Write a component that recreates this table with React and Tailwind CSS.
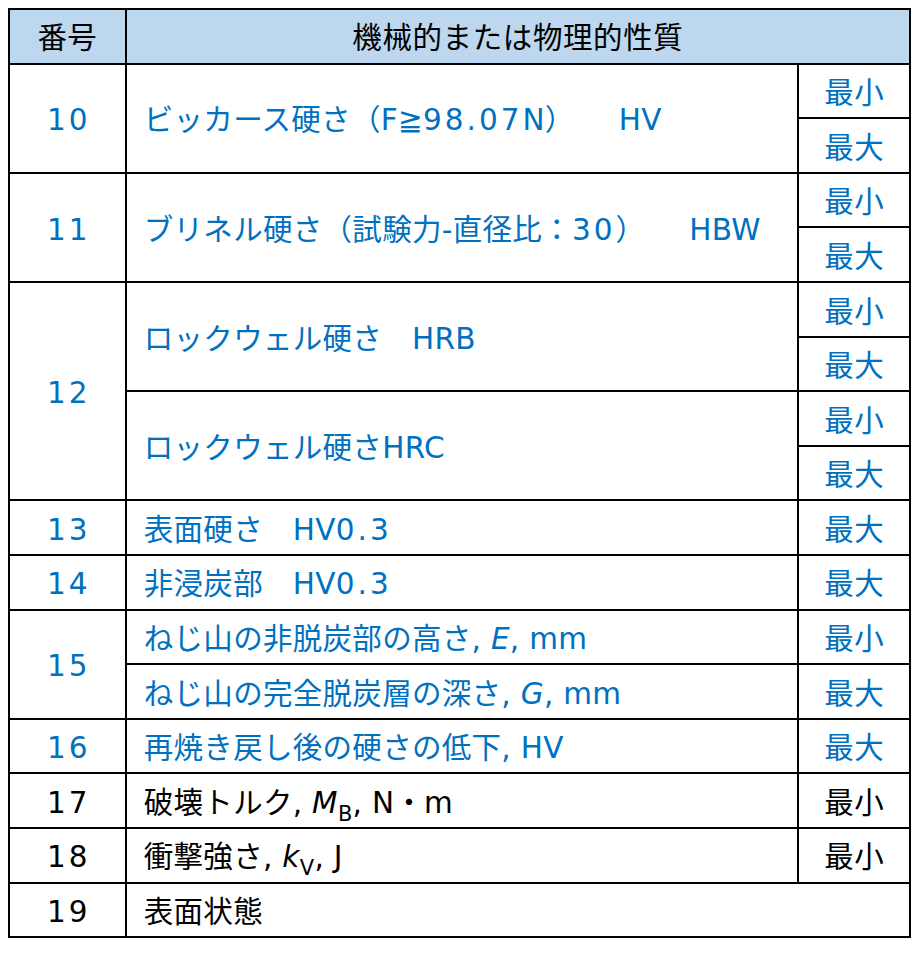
import React from 'react';

const blue = 'text-[#0070c0]';

// digits in the original are wide and round; spread them a little
const D = ({ children }) => <span className="tracking-[3px]">{children}</span>;

const Num = ({ children, rowSpan = 1, dark }) => (
  <td rowSpan={rowSpan} className={`border-2 border-black pt-[6px] pl-[3px] text-center ${dark ? 'text-black' : blue}`}>
    <D>{children}</D>
  </td>
);

const Prop = ({ children, rowSpan = 1, colSpan = 1, dark }) => (
  <td rowSpan={rowSpan} colSpan={colSpan} className={`border-2 border-black pl-[17px] pt-[6px] text-left ${dark ? 'text-black' : blue}`}>
    {children}
  </td>
);

const Lim = ({ children, dark }) => (
  <td className={`border-2 border-black pt-[6px] text-center ${dark ? 'text-black' : blue}`}>{children}</td>
);

const App = () => {
  return (
    <div className="bg-white w-[924px] h-[953px] pt-[8px] pl-[8px]">
      <table
        className="border-collapse w-[903px] text-[29.5px] leading-none tracking-[0.3px]"
        style={{ fontFamily: '"DejaVu Sans", "Noto Sans CJK JP", sans-serif' }}
      >
        <colgroup>
          <col className="w-[117px]" />
          <col className="w-[674px]" />
          <col className="w-[112px]" />
        </colgroup>
        <tbody>
          {/* header */}
          <tr className="h-[54.6px] bg-[#bdd7ee]">
            <th className="border-2 border-black pt-[5px] font-normal text-black">番号</th>
            <th colSpan={2} className="border-2 border-black pt-[5px] font-normal text-black tracking-[0.6px]">
              機械的または物理的性質
            </th>
          </tr>

          {/* 10 */}
          <tr className="h-[54.6px]">
            <Num rowSpan={2}>10</Num>
            <Prop rowSpan={2}>
              ビッカース硬さ（F≧<D>98.07</D>N）{'\u3000\u00a0\u00a0\u00a0'}HV
            </Prop>
            <Lim>最小</Lim>
          </tr>
          <tr className="h-[54.6px]">
            <Lim>最大</Lim>
          </tr>

          {/* 11 */}
          <tr className="h-[54.6px]">
            <Num rowSpan={2}>11</Num>
            <Prop rowSpan={2}>
              ブリネル硬さ（試験力-直径比：<D>30</D>）{'\u3000\u00a0\u00a0\u00a0'}HBW
            </Prop>
            <Lim>最小</Lim>
          </tr>
          <tr className="h-[54.6px]">
            <Lim>最大</Lim>
          </tr>

          {/* 12 */}
          <tr className="h-[54.6px]">
            <Num rowSpan={4}>12</Num>
            <Prop rowSpan={2}>ロックウェル硬さ{'\u3000'}HRB</Prop>
            <Lim>最小</Lim>
          </tr>
          <tr className="h-[54.6px]">
            <Lim>最大</Lim>
          </tr>
          <tr className="h-[54.6px]">
            <Prop rowSpan={2}>ロックウェル硬さHRC</Prop>
            <Lim>最小</Lim>
          </tr>
          <tr className="h-[54.6px]">
            <Lim>最大</Lim>
          </tr>

          {/* 13 */}
          <tr className="h-[54.6px]">
            <Num>13</Num>
            <Prop>
              表面硬さ{'\u3000'}HV<D>0.3</D>
            </Prop>
            <Lim>最大</Lim>
          </tr>

          {/* 14 */}
          <tr className="h-[54.6px]">
            <Num>14</Num>
            <Prop>
              非浸炭部{'\u3000'}HV<D>0.3</D>
            </Prop>
            <Lim>最大</Lim>
          </tr>

          {/* 15 */}
          <tr className="h-[54.6px]">
            <Num rowSpan={2}>15</Num>
            <Prop>
              ねじ山の非脱炭部の高さ, <i>E</i>, mm
            </Prop>
            <Lim>最小</Lim>
          </tr>
          <tr className="h-[54.6px]">
            <Prop>
              ねじ山の完全脱炭層の深さ, <i>G</i>, mm
            </Prop>
            <Lim>最大</Lim>
          </tr>

          {/* 16 */}
          <tr className="h-[54.6px]">
            <Num>16</Num>
            <Prop>再焼き戻し後の硬さの低下, HV</Prop>
            <Lim>最大</Lim>
          </tr>

          {/* 17 */}
          <tr className="h-[54.6px]">
            <Num dark>17</Num>
            <Prop dark>
              破壊トルク, <i>M</i>
              <sub className="text-[21px] -bottom-[8px]">B</sub>, N・m
            </Prop>
            <Lim dark>最小</Lim>
          </tr>

          {/* 18 */}
          <tr className="h-[54.6px]">
            <Num dark>18</Num>
            <Prop dark>
              衝撃強さ, <i>k</i>
              <sub className="text-[21px] -bottom-[8px]">V</sub>, J
            </Prop>
            <Lim dark>最小</Lim>
          </tr>

          {/* 19 */}
          <tr className="h-[54.6px]">
            <Num dark>19</Num>
            <Prop dark colSpan={2}>表面状態</Prop>
          </tr>
        </tbody>
      </table>
    </div>
  );
};

export default App;
